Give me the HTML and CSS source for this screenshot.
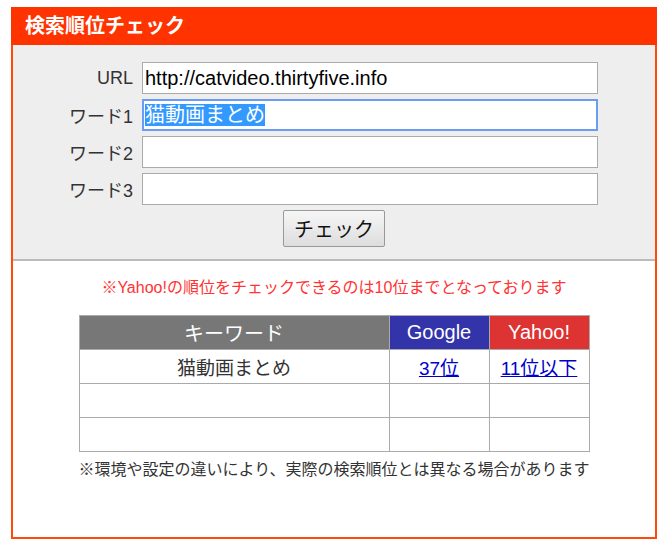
FILE: index.html
```html
<!DOCTYPE html>
<html lang="ja">
<head>
    <meta charset="UTF-8">
    <meta name="viewport" content="width=device-width, initial-scale=1.0">
    <title>検索順位チェック</title>
    <link rel="stylesheet" href="styles.css">
</head>
<body>
    <div class="checker">
        <h1 class="checker-title">検索順位チェック</h1>

        <form class="check-form">
            <div class="form-row">
                <label class="form-label">URL</label>
                <input class="form-input" type="text" value="http://catvideo.thirtyfive.info">
            </div>
            <div class="form-row">
                <label class="form-label">ワード1</label>
                <div class="form-input is-focused"><span class="selected">猫動画まとめ</span></div>
            </div>
            <div class="form-row">
                <label class="form-label">ワード2</label>
                <input class="form-input" type="text">
            </div>
            <div class="form-row">
                <label class="form-label">ワード3</label>
                <input class="form-input" type="text">
            </div>
            <div class="form-actions">
                <button class="check-button" type="button">チェック</button>
            </div>
        </form>

        <div class="results">
            <p class="notice">※Yahoo!の順位をチェックできるのは10位までとなっております</p>
            <table class="rank-table">
                <thead>
                    <tr>
                        <th class="col-keyword">キーワード</th>
                        <th class="col-google">Google</th>
                        <th class="col-yahoo">Yahoo!</th>
                    </tr>
                </thead>
                <tbody>
                    <tr>
                        <td>猫動画まとめ</td>
                        <td><a href="#">37位</a></td>
                        <td><a href="#">11位以下</a></td>
                    </tr>
                    <tr>
                        <td></td>
                        <td></td>
                        <td></td>
                    </tr>
                    <tr>
                        <td></td>
                        <td></td>
                        <td></td>
                    </tr>
                </tbody>
            </table>
            <p class="disclaimer">※環境や設定の違いにより、実際の検索順位とは異なる場合があります</p>
        </div>
    </div>
</body>
</html>
```

FILE: styles.css
```css
body {
    margin: 0;
    padding: 7px 0 0 11px;
    font-family: "Liberation Sans", "Noto Sans CJK JP", sans-serif;
    color: #333;
    background: #fff;
}

.checker {
    width: 646px;
    box-sizing: border-box;
    border: 2px solid #ff4a0a;
    border-top: none;
}

.checker-title {
    margin: 0 -2px;
    height: 38px;
    padding: 0 0 0 14px;
    background-color: #ff3300;
    color: #fff;
    font-size: 20px;
    font-weight: bold;
    line-height: 38px;
}

.check-form {
    background-color: #eeeeee;
    border-bottom: 2px solid #bbbbbb;
    padding: 17px 0 12px;
}

.form-row {
    display: flex;
    align-items: center;
    margin-bottom: 5px;
}

.form-label {
    width: 129px;
    padding-right: 9px;
    box-sizing: border-box;
    text-align: right;
    font-size: 18px;
    color: #333;
}

.form-input {
    width: 456px;
    height: 32px;
    box-sizing: border-box;
    border: 1px solid #aaaaaa;
    background: #fff;
    padding: 0 2px;
    font-family: "Liberation Sans", "Noto Sans CJK JP", sans-serif;
    font-size: 20px;
    color: #000;
    line-height: 30px;
}

.form-input.is-focused {
    border: 2px solid #6b9cf5;
    padding: 0 1px;
    line-height: 28px;
}

.selected {
    background-color: #3399ff;
    color: #fff;
}

.form-actions {
    display: flex;
    justify-content: center;
}

.check-button {
    width: 102px;
    height: 37px;
    border: 1px solid #999;
    border-radius: 2px;
    background: linear-gradient(#f6f6f6, #dddddd);
    font-family: "Noto Sans CJK JP", sans-serif;
    font-size: 20px;
    color: #111;
    padding: 0;
}

.results {
    padding: 15px 0 55px;
    text-align: center;
}

.notice {
    margin: 0 0 15px;
    font-size: 16px;
    line-height: 24px;
    color: #ff3333;
}

.rank-table {
    margin: 0 auto;
    width: 511px;
    border-collapse: collapse;
    font-family: "Liberation Sans", "Noto Sans CJK JP", sans-serif;
    font-size: 19px;
}

.rank-table th,
.rank-table td {
    border: 1px solid #aaaaaa;
    height: 33px;
    padding: 0;
    text-align: center;
}

.rank-table th {
    color: #fff;
    font-size: 20px;
    font-weight: normal;
}

.col-keyword {
    background-color: #777777;
}

.col-google {
    width: 99px;
    background-color: #3333aa;
}

.col-yahoo {
    width: 99px;
    background-color: #dd3333;
}

.rank-table a {
    color: #0000cc;
}

.disclaimer {
    margin: 6px 0 0;
    font-size: 16px;
    line-height: 24px;
    color: #333;
}
```
